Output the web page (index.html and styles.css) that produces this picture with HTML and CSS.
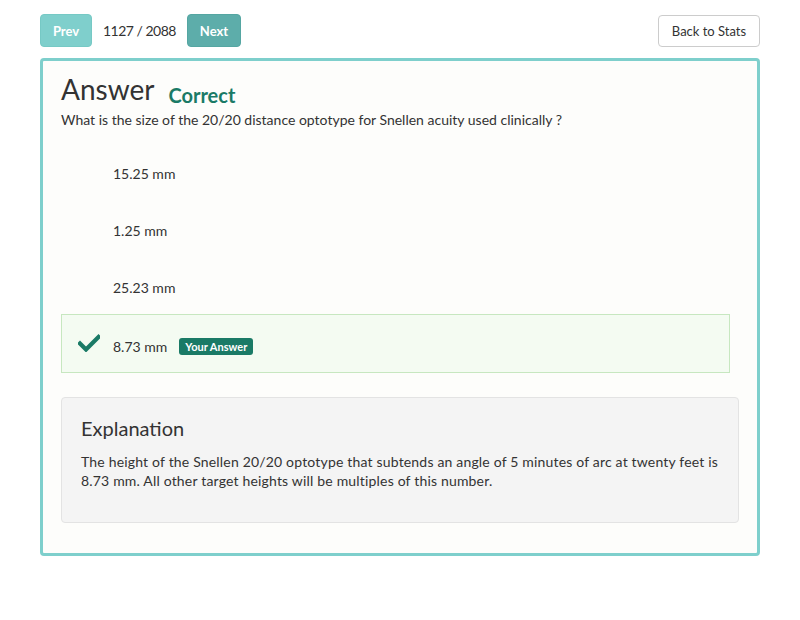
FILE: index.html
```html
<!DOCTYPE html>
<html>
<head>
<meta charset="utf-8">
<link rel="stylesheet" href="styles.css">
</head>
<body>
<div class="page">
  <div class="topbar">
    <div class="nav">
      <button class="btn btn-prev">Prev</button>
      <span class="counter">1127 / 2088</span>
      <button class="btn btn-next">Next</button>
    </div>
    <button class="btn-back">Back to Stats</button>
  </div>
  <div class="card">
    <div class="title-row">
      <h1 class="title">Answer</h1>
      <span class="status">Correct</span>
    </div>
    <p class="question">What is the size of the 20/20 distance optotype for Snellen acuity used clinically ?</p>
    <ul class="options">
      <li class="option"><span class="mark"></span><span>15.25 mm</span></li>
      <li class="option"><span class="mark"></span><span>1.25 mm</span></li>
      <li class="option"><span class="mark"></span><span>25.23 mm</span></li>
      <li class="option selected">
        <span class="mark"><svg width="22" height="18" viewBox="0 0 22 18"><path d="M2 9.5 L8 15.5 L20.5 3" fill="none" stroke="#1a7a66" stroke-width="4.2" stroke-linecap="square"/></svg></span>
        <span>8.73 mm</span>
        <span class="badge">Your Answer</span>
      </li>
    </ul>
    <div class="explanation">
      <h2 class="exp-title">Explanation</h2>
      <p class="exp-text">The height of the Snellen 20/20 optotype that subtends an angle of 5 minutes of arc at twenty feet is 8.73 mm. All other target heights will be multiples of this number.</p>
    </div>
  </div>
</div>
</body>
</html>
```
FILE: styles.css
```css
* { box-sizing: border-box; }
body {
  margin: 0;
  background: #ffffff;
  font-family: Lato, "Open Sans", sans-serif;
  font-size: 14px;
  color: #333333;
}
.page {
  padding: 14px 40px 0 40px;
}
.topbar {
  display: flex;
  justify-content: space-between;
  align-items: flex-start;
}
.nav {
  display: flex;
  align-items: center;
  gap: 11px;
}
.btn {
  height: 33px;
  border: 1px solid transparent;
  border-radius: 4px;
  color: #ffffff;
  font-family: Lato, sans-serif;
  font-weight: 700;
  font-size: 13px;
  padding: 0 8px;
}
.btn-prev {
  background: #7fcfcc;
  border-color: #76c9c5;
  width: 52px;
}
.btn-next {
  background: #5dadaa;
  border-color: #55a6a2;
  width: 54px;
}
.counter {
  font-size: 14px;
  letter-spacing: -0.5px;
  color: #333;
}
.btn-back {
  margin-top: 1px;
  height: 32px;
  width: 102px;
  background: #ffffff;
  border: 1px solid #cccccc;
  border-radius: 4px;
  font-family: Lato, sans-serif;
  font-size: 13px;
  color: #333;
}
.card {
  margin-top: 11px;
  border: 3px solid #7ecfcc;
  border-radius: 4px;
  background: #fdfdfb;
  padding: 8px 18px 30px 18px;
}
.title-row {
  display: flex;
  align-items: baseline;
  gap: 14px;
}
.title {
  margin: 0;
  font-size: 28px;
  font-weight: 400;
  line-height: 41px;
  color: #333;
}
.status {
  font-size: 20px;
  font-weight: 700;
  color: #1a7a66;
  position: relative;
  top: 3px;
}
.question {
  margin: 0;
  line-height: 20px;
}
.options {
  list-style: none;
  margin: 15px 9px 0 0;
  padding: 0;
  display: flex;
  flex-direction: column;
}
.option {
  display: flex;
  align-items: center;
  height: 57px;
  padding-left: 15px;
  border: 1px solid transparent;
}
.option .mark {
  width: 36px;
  display: flex;
  align-items: center;
  margin-left: 1px;
  margin-right: -1px;
}
.option.selected {
  height: 59px;
  padding-top: 5px;
  background: #f4fbf2;
  border-color: #c7e7c0;
  margin-top: -2px;
}
.option.selected .mark {
  margin-top: -6px;
}
.badge {
  margin-left: 12px;
  background: #1a7a66;
  color: #fff;
  font-size: 11px;
  font-weight: 700;
  padding: 2px 6px;
  border-radius: 3px;
}
.explanation {
  margin-top: 24px;
  background: #f4f4f4;
  border: 1px solid #e3e3e3;
  border-radius: 4px;
  padding: 16px 19px 32px 19px;
}
.exp-title {
  margin: 0 0 10px 0;
  font-size: 20px;
  font-weight: 400;
  line-height: 28px;
  color: #333;
}
.exp-text {
  margin: 0;
  line-height: 19px;
  letter-spacing: 0.18px;
}
```
